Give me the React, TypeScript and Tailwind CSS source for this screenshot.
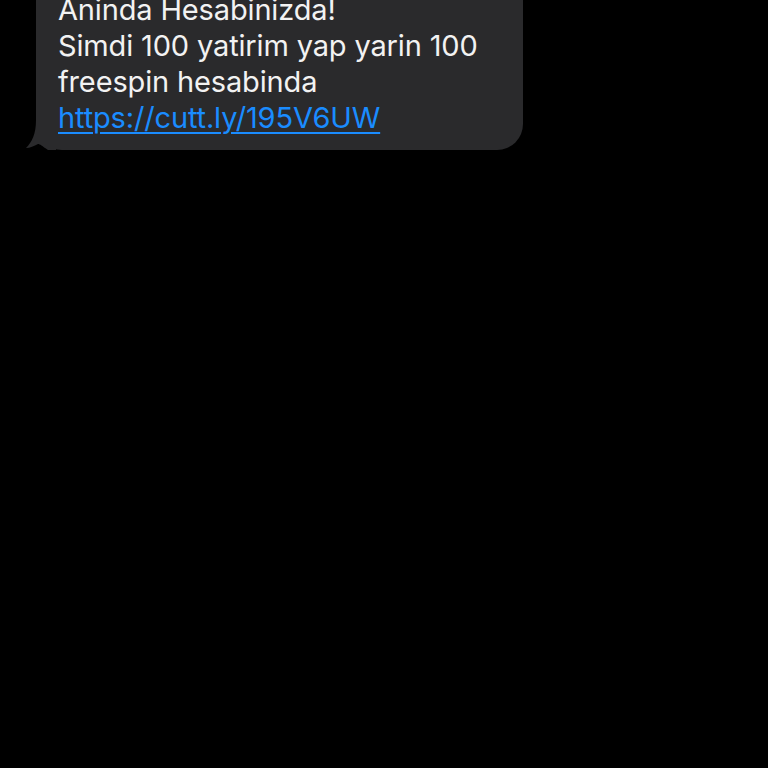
export default function App() {
  return (
    <div className="w-[768px] h-[768px] bg-black overflow-hidden" style={{ fontFamily: 'Inter, "Noto Sans", sans-serif' }}>
      <div className="relative ml-[36px] w-[487px] -mt-[42px] bg-[#2a2a2c] rounded-[26px] pl-[22px] pr-[10px] pt-[34px] pb-[14px]">
        <div className="text-[29px] leading-[36px] text-[#f2f2f2] tracking-[-0.15px] whitespace-nowrap">
          <div>Aninda Hesabinizda!</div>
          <div>Simdi 100 yatirim yap yarin 100</div>
          <div>freespin hesabinda</div>
          <div>
            <span className="text-[#1a8cff] underline decoration-[2px] underline-offset-[4px]">https://cutt.ly/195V6UW</span>
          </div>
        </div>
        <svg className="absolute left-[-10px] bottom-0" width="30" height="30" viewBox="0 0 30 30">
          <path d="M10 0 L30 0 L30 30 L22 30 C16 26 14 24 12 24 C8 26 4 28 0 28 C6 22 10 14 10 0 Z" fill="#2a2a2c" />
        </svg>
      </div>
    </div>
  );
}
